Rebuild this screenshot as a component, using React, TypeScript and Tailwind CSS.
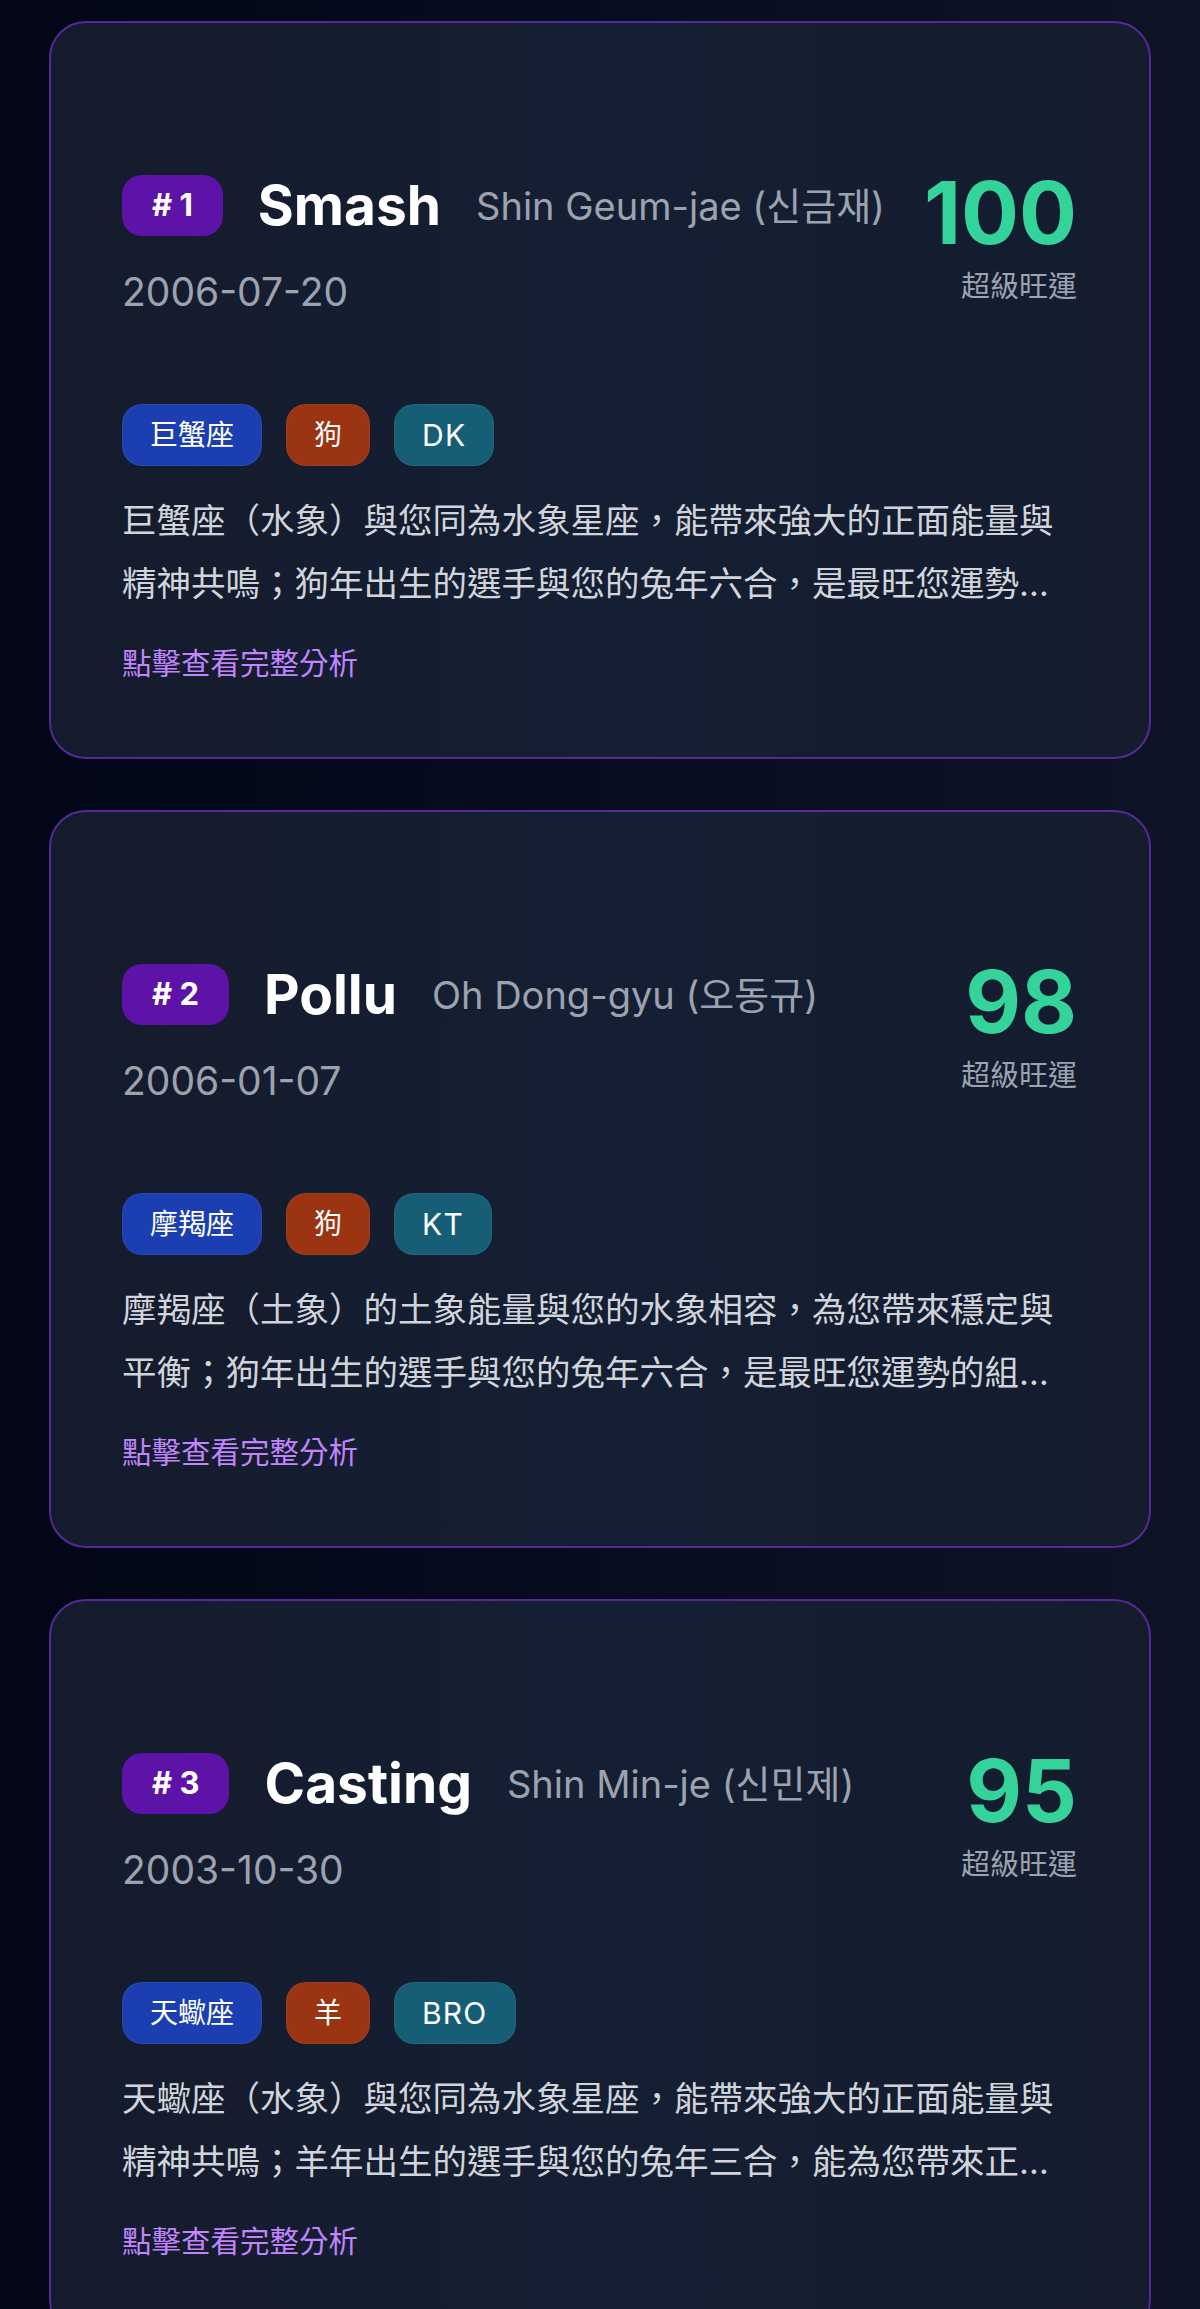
import React from "react";

// --- Types & Data ---

type Player = {
  rank: number;
  nick: string;
  name: string;
  birthday: string;
  score: number;
  label: string;
  zodiac: string;
  animal: string;
  team: string;
  summary: string;
};

const PLAYERS: Player[] = [
  {
    rank: 1,
    nick: "Smash",
    name: "Shin Geum-jae (신금재)",
    birthday: "2006-07-20",
    score: 100,
    label: "超級旺運",
    zodiac: "巨蟹座",
    animal: "狗",
    team: "DK",
    summary:
      "巨蟹座（水象）與您同為水象星座，能帶來強大的正面能量與精神共鳴；狗年出生的選手與您的兔年六合，是最旺您運勢的組合，能在關鍵時刻給您最強的支持。",
  },
  {
    rank: 2,
    nick: "Pollu",
    name: "Oh Dong-gyu (오동규)",
    birthday: "2006-01-07",
    score: 98,
    label: "超級旺運",
    zodiac: "摩羯座",
    animal: "狗",
    team: "KT",
    summary:
      "摩羯座（土象）的土象能量與您的水象相容，為您帶來穩定與平衡；狗年出生的選手與您的兔年六合，是最旺您運勢的組合，讓您在比賽季中好運連連。",
  },
  {
    rank: 3,
    nick: "Casting",
    name: "Shin Min-je (신민제)",
    birthday: "2003-10-30",
    score: 95,
    label: "超級旺運",
    zodiac: "天蠍座",
    animal: "羊",
    team: "BRO",
    summary:
      "天蠍座（水象）與您同為水象星座，能帶來強大的正面能量與精神共鳴；羊年出生的選手與您的兔年三合，能為您帶來正面的助力與源源不絕的好運。",
  },
];

// --- Components ---

function Tag({ text, color, latin }: { text: string; color: string; latin?: boolean }) {
  return (
    <span
      className={`flex h-[62px] items-center rounded-[20px] border border-white/5 px-[27px] text-white ${color} ${
        latin ? "text-[30px] tracking-[0.04em]" : "text-[28px]"
      }`}
    >
      {text}
    </span>
  );
}

function PlayerCard({ p }: { p: Player }) {
  return (
    <div className="rounded-[37px] border-2 border-[#57289a] bg-gradient-to-r from-[#141b2c] via-[#151f33] to-[#141c2e] pt-[152px] pr-[72px] pb-[74px] pl-[71px]">
      {/* header */}
      <div className="flex items-start justify-between">
        <div className="flex flex-col">
          <div className="flex items-center gap-[35px]">
            <span className="flex h-[61px] items-center rounded-[20px] bg-[#5e13a8] px-[30px] text-[31px] font-bold text-white">
              # {p.rank}
            </span>
            <span className="text-[55px] leading-none font-bold text-white">
              {p.nick}
            </span>
            <span className="text-[38px] leading-none text-[#9ca3af]">
              {p.name}
            </span>
          </div>
          <span className="mt-[34px] text-[39px] leading-[44px] text-[#9ca3af]">
            {p.birthday}
          </span>
        </div>
        <div className="-mt-[5px] flex flex-col items-end">
          <span className="text-[86px] leading-none font-bold text-[#34d399]">
            {p.score}
          </span>
          <span className="mt-[16px] text-[29px] leading-none text-[#9ca3af]">
            {p.label}
          </span>
        </div>
      </div>

      {/* tags */}
      <div className="mt-[90px] flex gap-[24px]">
        <Tag text={p.zodiac} color="bg-[#1b3fb0]" />
        <Tag text={p.animal} color="bg-[#9a3412]" />
        <Tag text={p.team} color="bg-[#155e75]" latin />
      </div>

      <p className="mt-[23px] line-clamp-2 text-[34.5px] leading-[63px] text-[#d1d5db]">
        {p.summary}
      </p>

      <div className="mt-[28px] text-[29.5px] leading-[40px] text-[#c084fc]">
        點擊查看完整分析
      </div>
    </div>
  );
}

export default function App() {
  return (
    <div className="min-h-screen bg-gradient-to-r from-[#020617] via-[#070d1e] to-[#0e1425] px-[49px] pt-[21px] pb-[40px] font-['Inter','Noto_Sans_CJK_TC','Noto_Sans_CJK_KR',sans-serif]">
      <div className="flex flex-col gap-[51px]">
        {PLAYERS.map((p) => (
          <PlayerCard key={p.rank} p={p} />
        ))}
      </div>
    </div>
  );
}
